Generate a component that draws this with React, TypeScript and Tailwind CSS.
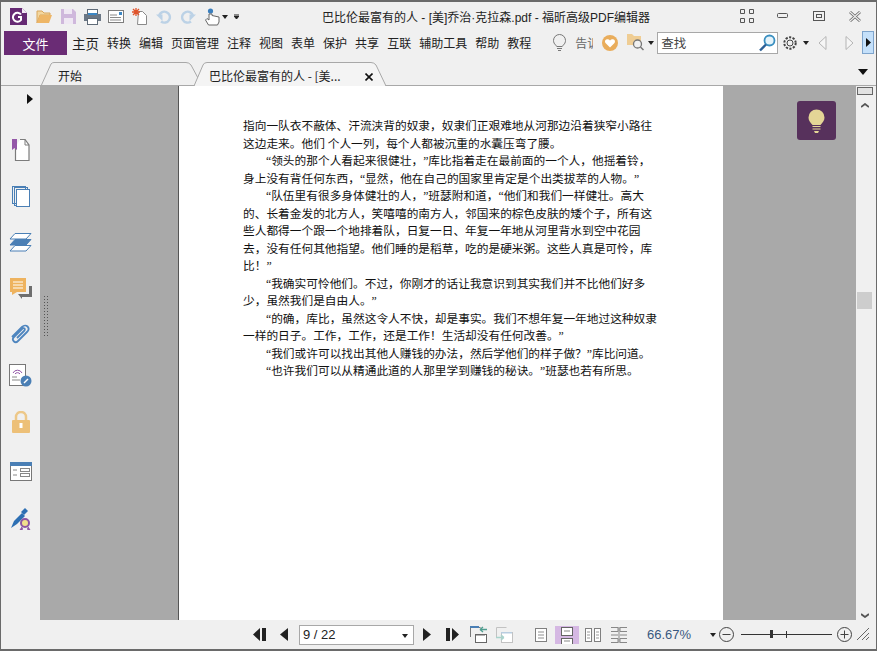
import React from "react";

const F = { fontFamily: '"Noto Sans CJK SC", sans-serif' };

const lines: [string, boolean][] = [
  ["指向一队衣不蔽体、汗流浃背的奴隶，奴隶们正艰难地从河那边沿着狭窄小路往", false],
  ["这边走来。他们 个人一列，每个人都被沉重的水囊压弯了腰。", false],
  ["“领头的那个人看起来很健壮，”库比指着走在最前面的一个人，他摇着铃，", true],
  ["身上没有背任何东西，“显然，他在自己的国家里肯定是个出类拔萃的人物。”", false],
  ["“队伍里有很多身体健壮的人，”班瑟附和道，“他们和我们一样健壮。高大", true],
  ["的、长着金发的北方人，笑嘻嘻的南方人，邻国来的棕色皮肤的矮个子，所有这", false],
  ["些人都得一个跟一个地排着队，日复一日、年复一年地从河里背水到空中花园", false],
  ["去，没有任何其他指望。他们睡的是稻草，吃的是硬米粥。这些人真是可怜，库", false],
  ["比！”", false],
  ["“我确实可怜他们。不过，你刚才的话让我意识到其实我们并不比他们好多", true],
  ["少，虽然我们是自由人。”", false],
  ["“的确，库比，虽然这令人不快，却是事实。我们不想年复一年地过这种奴隶", true],
  ["一样的日子。工作，工作，还是工作！生活却没有任何改善。”", false],
  ["“我们或许可以找出其他人赚钱的办法，然后学他们的样子做？”库比问道。", true],
  ["“也许我们可以从精通此道的人那里学到赚钱的秘诀。”班瑟也若有所思。", true],
];

const menu = ["转换", "编辑", "页面管理", "注释", "视图", "表单", "保护", "共享", "互联", "辅助工具", "帮助", "教程"];

function Ic({ w, h, ml = 0, children }: { w: number; h: number; ml?: number; children: React.ReactNode }) {
  return (
    <svg width={w} height={h} viewBox={`0 0 ${w} ${h}`} style={{ marginLeft: ml, flex: "none" }}>
      {children}
    </svg>
  );
}

function Caret({ ml, color = "#222" }: { ml: number; color?: string }) {
  return (
    <Ic w={6} h={4} ml={ml}>
      <path d="M0 0h6L3 4z" fill={color} />
    </Ic>
  );
}

export default function App() {
  return (
    <div className="relative w-[877px] h-[651px] flex flex-col overflow-hidden bg-[#f0f0f0] border-2 border-t-2 border-[#6a6a6a] border-r-[1px] border-l-[1px] text-[#222]" style={F}>
      {/* Title row */}
      <div className="relative h-[28px] flex items-center flex-none pl-[9px] pt-[1px]">
        <Ic w={17} h={17}>
          <path d="M0 0h12l5 5v12H0z" fill="#662a73" />
          <path d="M12 0v5h5z" fill="#f4e9f6" />
          <path d="M11 6.500A4.500 4.500 0 1 0 11 12V9H8" fill="none" stroke="#fff" strokeWidth="2" />
        </Ic>
        <Ic w={17} h={15} ml={9}>
          <path d="M1 14V2h5l2 2h6v2H4z" fill="#f3d79f" stroke="#d9a65c" />
          <path d="M1 14l3-8h12l-3 8z" fill="#eeb666" />
        </Ic>
        <Ic w={15} h={15} ml={8}>
          <path d="M0 0h12l3 3v12H0z" fill="#cfb8dc" />
          <rect x="3" y="0" width="8" height="5" fill="#efe8f3" />
          <rect x="3" y="9" width="9" height="6" fill="#efe8f3" />
        </Ic>
        <Ic w={17} h={16} ml={8}>
          <rect x="3.500" y="0.500" width="10" height="5" fill="#fff" stroke="#5f6b78" />
          <rect x="0" y="5" width="17" height="7" fill="#6b7785" />
          <rect x="4" y="4" width="9" height="2" fill="#3c87c4" />
          <rect x="3.500" y="9.500" width="10" height="6" fill="#fff" stroke="#5f6b78" />
        </Ic>
        <Ic w={16} h={13} ml={7}>
          <rect x="0.500" y="0.500" width="15" height="12" fill="#fff" stroke="#7d7d7d" />
          <rect x="11" y="2" width="3" height="3" fill="#3c87c4" />
          <path d="M2 5h7M2 7.500h11M2 10h11" stroke="#8a8a8a" />
        </Ic>
        <Ic w={15} h={17} ml={8}>
          <path d="M6.500 3.500h4l4 4v9h-9z" fill="#fff" stroke="#8a8a8a" />
          <path d="M4 0v8M0 4h8M1 1l6 6M7 1L1 7" stroke="#e0532a" strokeWidth="1.300" />
        </Ic>
        <Ic w={16} h={15} ml={9}>
          <path d="M3 7a5.500 5.500 0 1 1 2 5.500" fill="none" stroke="#bcd2e6" strokeWidth="2.400" />
          <path d="M0 5.500h6.500V12z" fill="#bcd2e6" />
        </Ic>
        <Ic w={16} h={15} ml={8}>
          <path d="M13 7a5.500 5.500 0 1 0-2 5.500" fill="none" stroke="#bcd2e6" strokeWidth="2.400" />
          <path d="M16 5.500H9.500V12z" fill="#bcd2e6" />
        </Ic>
        <Ic w={15} h={18} ml={9}>
          <circle cx="5.500" cy="3" r="2.600" fill="#3c7fbd" />
          <path d="M4 6v6L2 10.500 0.500 12l3 5h9l1.500-3v-5l-7-1.500V6z" fill="#fff" stroke="#666" />
        </Ic>
        <Caret ml={2} />
        <Ic w={5} h={6} ml={6}>
          <path d="M0 0h5M0 2h5L2.500 5z" stroke="#222" fill="#222" strokeWidth="1" />
        </Ic>
        <div className="absolute left-[321px] top-[7px] text-[12px] leading-[18px] whitespace-nowrap" style={{ fontFamily: '"Liberation Sans", "Noto Sans CJK SC", sans-serif' }}>巴比伦最富有的人 - [美]乔治·克拉森.pdf - 福昕高级PDF编辑器</div>
        <div className="absolute left-[739px] top-[7px] flex items-center">
          <Ic w={14} h={14}>
            <path d="M.5.5h4v4h-4zM9.500.5h4v4h-4zM.5 9.500h4v4h-4zM9.500 9.500h4v4h-4z" fill="none" stroke="#555" />
          </Ic>
          <Ic w={12} h={6} ml={23}>
            <rect x=".5" y=".5" width="10" height="4" rx="1" fill="none" stroke="#555" />
          </Ic>
          <Ic w={12} h={10} ml={24}>
            <rect x=".5" y=".5" width="11" height="9" fill="none" stroke="#555" />
            <rect x="3.500" y="3.500" width="5" height="3" fill="none" stroke="#555" />
          </Ic>
          <Ic w={12} h={11} ml={24}>
            <path d="M1 1l10 9M11 1L1 10" stroke="#666" strokeWidth="2.800" />
            <path d="M1 1l10 9M11 1L1 10" stroke="#eee" strokeWidth="1.200" />
          </Ic>
        </div>
      </div>

      {/* Menu row */}
      <div className="relative h-[25px] flex items-center flex-none pl-[3px]">
        <div className="w-[63px] h-[24px] flex items-center justify-center bg-[#6a2c75] text-white text-[13px] pt-[2px]">文件</div>
        <div className="ml-[5px] text-[13.500px] leading-[24px] whitespace-nowrap pt-[1px]">主页</div>
        <div className="ml-[8px] flex gap-[8px] text-[12px] leading-[24px] whitespace-nowrap pt-[1px]">
          {menu.map((m) => (
            <span key={m}>{m}</span>
          ))}
        </div>
        <Ic w={13} h={18} ml={22}>
          <path d="M4 12.500C1 10 .5 8 .5 6.500a6 6 0 0 1 12 0C12.500 8 12 10 9 12.500z" fill="none" stroke="#777" />
          <path d="M4 14.500h5M5 16.500h3" stroke="#777" />
        </Ic>
        <div className="ml-[9px] w-[18px] overflow-hidden text-[12px] text-[#666] leading-[18px] whitespace-nowrap pt-[1px]">告诉</div>
        <Ic w={16} h={16} ml={9}>
          <circle cx="8" cy="8" r="8" fill="#e9ad5c" />
          <path d="M8 12.500L3.500 8c-2-3 2.500-5 4.500-2.500C10 3 14.500 5 12.500 8z" fill="#fff" />
        </Ic>
        <Ic w={17} h={17} ml={9}>
          <path d="M0 0h5l2 2h7v9H0z" fill="#efcd94" />
          <circle cx="10.500" cy="10" r="4" fill="#f0f0f0" stroke="#777" strokeWidth="1.300" />
          <path d="M13.500 13l3 3" stroke="#777" strokeWidth="1.500" />
        </Ic>
        <Caret ml={4} />
        <div className="ml-[3px] w-[121px] h-[22px] relative flex items-center bg-white border border-[#a8a8a8] pl-[3px] pt-[1px] text-[12.500px] text-[#444]">
          查找
          <svg className="absolute right-[1px] top-[1px]" width="17" height="18" viewBox="0 0 17 18">
            <circle cx="10.500" cy="6.500" r="5" fill="#e5f3fa" stroke="#3a8fc0" strokeWidth="1.800" />
            <path d="M7 10.500l-6 6" stroke="#2b5f96" strokeWidth="2.400" />
          </svg>
        </div>
        <Ic w={14} h={14} ml={5}>
          <circle cx="7" cy="7" r="3" fill="none" stroke="#444" />
          <circle cx="7" cy="7" r="5.700" fill="none" stroke="#444" strokeWidth="2" strokeDasharray="2.200 1.400" />
        </Ic>
        <Caret ml={6} />
        <Ic w={9} h={14} ml={9}>
          <path d="M8 .5L1 7l7 6.500z" fill="#f6f6f6" stroke="#b4b4b4" />
        </Ic>
        <Ic w={9} h={14} ml={18}>
          <path d="M1 .5L8 7l-7 6.500z" fill="#f6f6f6" stroke="#b4b4b4" />
        </Ic>
        <div className="ml-[8px] w-[12px] h-[23px] flex items-center justify-center bg-[#c4e0fa] border border-[#7ea4cc]">
          <Ic w={5} h={9}>
            <path d="M0 0l5 4.500L0 9z" fill="#111" />
          </Ic>
        </div>
      </div>

      {/* Tab row */}
      <div className="relative h-[31px] flex-none border-b border-[#a8a8a8]">
        <div className="absolute left-[39px] top-[7px] w-[159px] h-[24px] text-[12px] leading-[24px] pl-[18px] pt-[2px]">
          <svg className="absolute left-0 top-0" width="159" height="24" viewBox="0 0 159 24">
            <path d="M1 24L11 2Q12 .5 14 .5H146Q149 .5 151 3L158 16" fill="none" stroke="#a8a8a8" />
          </svg>
          <span className="relative">开始</span>
        </div>
        <div className="absolute left-[192px] top-[7px] w-[194px] h-[25px] text-[12px] leading-[24px] pl-[16px] pt-[2px] flex items-center">
          <svg className="absolute left-0 top-0" width="194" height="25" viewBox="0 0 194 25">
            <path d="M1 24.500L10 3Q11 .5 14 .5H178Q181 .5 183 3L193 24.500z" fill="#f4f4f4" />
            <path d="M1 24L10 3Q11 .5 14 .5H178Q181 .5 183 3L193 24" fill="none" stroke="#a8a8a8" />
          </svg>
          <span className="relative whitespace-nowrap">巴比伦最富有的人 - [美...</span>
          <svg className="absolute left-[172px] top-[11px]" width="8" height="8" viewBox="0 0 8 8">
            <path d="M.5.5l7 7M7.500.5l-7 7" stroke="#111" strokeWidth="1.600" />
          </svg>
        </div>
        <svg className="absolute left-[857px] top-[14px]" width="10" height="6" viewBox="0 0 10 6">
          <path d="M0 0h10L5 6z" fill="#111" />
        </svg>
      </div>

      {/* Main */}
      <div className="flex-1 min-h-0 flex">
        <div className="w-[39px] flex-none flex flex-col items-center relative">
          <svg className="absolute left-[26px] top-[8px]" width="6" height="10" viewBox="0 0 6 10">
            <path d="M0 0l6 5-6 5z" fill="#111" />
          </svg>
          <div className="flex flex-col items-center pt-[53px]">
            <Ic w={18} h={22}>
              <path d="M3.500 8v13.500h13.500V6L13 .5H8" fill="#fff" stroke="#7c7c7c" strokeWidth="1.200" />
              <path d="M13 .5V6h4" fill="none" stroke="#7c7c7c" />
              <path d="M0 0h5v11l-2.500-2L0 11z" fill="#9457a8" />
            </Ic>
            <div className="h-[25px]" />
            <Ic w={18} h={21}>
              <rect x=".5" y=".5" width="13" height="17" fill="none" stroke="#4a7fb5" />
              <rect x="2.500" y="1.500" width="13" height="18" fill="none" stroke="#4a7fb5" />
              <rect x="4.500" y="3.500" width="13" height="17" fill="#fff" stroke="#4a7fb5" />
            </Ic>
            <div className="h-[26px]" />
            <Ic w={23} h={19}>
              <path d="M6 .5h16L17 6H1z" fill="#fff" stroke="#4a7fb5" />
              <path d="M6 6.500h16L17 12H1z" fill="#4a7fb5" stroke="#4a7fb5" />
              <path d="M6 12.500h16L17 18H1z" fill="#fff" stroke="#4a7fb5" />
            </Ic>
            <div className="h-[26px]" />
            <Ic w={22} h={22}>
              <rect x="0" y="0" width="16" height="14" fill="#eeb35f" />
              <path d="M2 14h5l-5 3z" fill="#eeb35f" />
              <path d="M3 4h10M3 7h10M3 10h10" stroke="#fff" />
              <path d="M8 16h11V8h3v11H12v2z" fill="#6e6e6e" />
            </Ic>
            <div className="h-[23px]" />
            <Ic w={21} h={21}>
              <path d="M2 14L12 4c4-4 9 1 5 5L8 18c-3 3-7-1-4-4l8-8c2-2 4 0 2 2l-7 7" fill="none" stroke="#4f86bf" strokeWidth="1.800" />
            </Ic>
            <div className="h-[20px]" />
            <Ic w={23} h={23}>
              <rect x=".5" y=".5" width="16" height="21" fill="#fff" stroke="#777" />
              <path d="M4 9a5 5 0 0 1 9 0M6 10a3 3 0 0 1 5 0" fill="none" stroke="#9457a8" />
              <path d="M3 13h5M3 16h8" stroke="#888" />
              <circle cx="17" cy="17" r="5.500" fill="#4a7fb5" />
              <path d="M15 19l4-4" stroke="#fff" strokeWidth="1.500" />
            </Ic>
            <div className="h-[24px]" />
            <Ic w={18} h={22}>
              <path d="M4 9V6a5 5 0 0 1 10 0v3" fill="none" stroke="#edc889" strokeWidth="2.500" />
              <rect x="0" y="9" width="18" height="13" rx="1" fill="#edc078" />
              <rect x="7.500" y="12" width="3" height="5" fill="#fff" />
            </Ic>
            <div className="h-[29px]" />
            <Ic w={22} h={19}>
              <rect x=".5" y=".5" width="21" height="18" fill="#fff" stroke="#777" />
              <rect x="0" y="0" width="22" height="4" fill="#4a7fb5" />
              <path d="M3 8h4M3 13h4" stroke="#888" />
              <rect x="10.500" y="6.500" width="9" height="3" fill="none" stroke="#888" />
              <rect x="10.500" y="11.500" width="9" height="3" fill="none" stroke="#888" />
            </Ic>
            <div className="h-[27px]" />
            <Ic w={22} h={22}>
              <path d="M1 20l3-7 8-8 3 3-8 8z" fill="#2d6fb3" />
              <path d="M11 4l4-4 3 3-4 4z" fill="#2d6fb3" />
              <circle cx="15" cy="15" r="4" fill="#f1df8c" stroke="#8d55a3" strokeWidth="2" />
              <path d="M12 19l-2 3 3-1M18 19l2 3-3-1" fill="#8d55a3" stroke="#8d55a3" />
            </Ic>
          </div>
        </div>

        <div className="relative flex-1 min-w-0 bg-[#a9a9a9] flex">
          <div className="absolute left-[3px] top-[209px] w-[5px] h-[43px] bg-[radial-gradient(#555_0.9px,transparent_1px)] bg-[length:3px_3px]" />
          <div className="ml-[138px] w-[545px] h-full bg-white border-l border-[#555] pt-[32px] pl-[64px] text-[11.700px] leading-[17.500px] text-[#111] whitespace-nowrap [text-spacing-trim:space-all]" style={{ fontFamily: '"Liberation Serif", "Noto Sans CJK SC", serif' }}>
            {lines.map(([t, ind]) => (
              <div key={t} className={ind ? "pl-[23px]" : ""}>
                {t}
              </div>
            ))}
          </div>
          <div className="absolute left-[757px] top-[15px] w-[39px] h-[39px] rounded-[3px] bg-[#57315c] flex items-center justify-center">
            <Ic w={17} h={24}>
              <path d="M4.500 16C2 13 .5 11.500.5 8.500a8 8 0 0 1 16 0C16.500 11.500 15 13 12.500 16z" fill="#e4d596" />
              <path d="M4.500 17.500h8M4.500 20h8" stroke="#e4d596" />
              <path d="M6 22h5l-1 2H7z" fill="#e4d596" />
            </Ic>
          </div>
        </div>

        <div className="w-[20px] flex-none flex flex-col items-center bg-[#f0f0f0] pr-[3px]">
          <div className="w-[16px] h-[8px] mt-[1px] bg-[#e2e2e2] border border-[#666]" />
          <div className="h-[8px]" />
          <Ic w={8} h={5} ml={0}>
            <path d="M0 4l4-3 4 3" fill="none" stroke="#555" strokeWidth="1.800" />
          </Ic>
          <div className="h-[184px]" />
          <div className="w-[15px] h-[17px] bg-[#cdcdcd]" />
          <div className="flex-1" />
          <Ic w={8} h={5}>
            <path d="M0 1l4 3 4-3" fill="none" stroke="#555" strokeWidth="1.800" />
          </Ic>
          <div className="h-[2px]" />
        </div>
      </div>

      {/* Bottom bar */}
      <div className="h-[29px] flex-none flex items-center pl-[252px] relative">
        <Ic w={13} h={13}>
          <path d="M7 0v13L0 6.500zM9 0h4v13H9z" fill="#222" />
        </Ic>
        <Ic w={8} h={13} ml={14}>
          <path d="M8 0v13L0 6.500z" fill="#222" />
        </Ic>
        <div className="ml-[11px] w-[115px] h-[20px] relative flex items-center bg-white border border-[#a8a8a8] pl-[3px] text-[13px] whitespace-nowrap" style={{ fontFamily: '"Liberation Sans", sans-serif' }}>
          9 / 22
          <svg className="absolute right-[5px] top-[8px]" width="6" height="4" viewBox="0 0 6 4">
            <path d="M0 0h6L3 4z" fill="#222" />
          </svg>
        </div>
        <Ic w={8} h={13} ml={9}>
          <path d="M0 0v13l8-6.500z" fill="#222" />
        </Ic>
        <Ic w={13} h={13} ml={15}>
          <path d="M0 0h4v13H0zM6 0v13l7-6.500z" fill="#222" />
        </Ic>
        <Ic w={17} h={17} ml={11}>
          <path d="M.5 11V1.500h10" fill="none" stroke="#777" />
          <path d="M0 0h9v2H0z" fill="#4a7fb5" />
          <rect x="5.500" y="8.500" width="11" height="8" fill="#fff" stroke="#666" />
          <path d="M5 8h10v1.500H5z" fill="#666" />
          <path d="M10 3.500h7M10 3.500l3-2.500M10 3.500l3 2.500" stroke="#4f9d8f" fill="none" strokeWidth="1.300" />
        </Ic>
        <Ic w={17} h={17} ml={9}>
          <path d="M.5 11V1.500h10" fill="none" stroke="#c2c2c2" />
          <rect x="5.500" y="6.500" width="11" height="10" fill="#fff" stroke="#c2c2c2" />
          <path d="M5 6h11v1.500H5z" fill="#b8cde0" />
          <path d="M0 11.500h8M8 11.500l-3-2.500M8 11.500l-3 2.500" stroke="#a9d3cc" fill="none" strokeWidth="1.300" />
        </Ic>
        <Ic w={12} h={14} ml={22}>
          <rect x=".5" y=".5" width="11" height="13" fill="#fff" stroke="#808080" />
          <path d="M3 4h6M3 7h6M3 10h6" stroke="#909090" />
        </Ic>
        <div className="ml-[8px] w-[24px] h-[18px] bg-[#d5b8e3] flex items-start justify-center overflow-hidden pt-[1px]">
          <Ic w={12} h={17}>
            <rect x=".5" y=".5" width="11" height="8" fill="#fff" stroke="#666" />
            <rect x=".5" y="11.500" width="11" height="8" fill="#fff" stroke="#666" />
            <path d="M3 4h6M3 14h6" stroke="#888" />
          </Ic>
        </div>
        <Ic w={16} h={14} ml={6}>
          <rect x=".5" y=".5" width="6" height="13" fill="#fff" stroke="#808080" />
          <rect x="9.500" y=".5" width="6" height="13" fill="#fff" stroke="#808080" />
          <path d="M2 4h3M2 7h3M2 10h3M11 4h3M11 7h3M11 10h3" stroke="#999" />
        </Ic>
        <Ic w={16} h={16} ml={10}>
          <path d="M0 .5h7v4H0M16 .5H9v4h7M0 8h7M9 8h7M0 11.500h7v4H0M16 11.500H9v4h7M8 0v16" fill="none" stroke="#888" />
        </Ic>
        <div className="ml-[20px] w-[44px] text-[#39587f] text-[13px] whitespace-nowrap" style={{ fontFamily: '"Liberation Sans", sans-serif' }}>66.67%</div>
        <Caret ml={19} />
        <Ic w={15} h={15} ml={3}>
          <circle cx="7.500" cy="7.500" r="7" fill="none" stroke="#444" />
          <path d="M3.500 7.500h8" stroke="#444" />
        </Ic>
        <div className="ml-[7px] w-[91px] h-[13px] relative flex items-center">
          <div className="w-full h-[1px] bg-[#333]" />
          <div className="absolute left-[29px] top-[2px] w-[3px] h-[8px] bg-[#333]" />
          <div className="absolute left-[45px] top-[3px] w-[1px] h-[7px] bg-[#333]" />
        </div>
        <Ic w={15} h={15} ml={5}>
          <circle cx="7.500" cy="7.500" r="7" fill="none" stroke="#444" />
          <path d="M3.500 7.500h8M7.500 3.500v8" stroke="#444" />
        </Ic>
        <Ic w={13} h={13} ml={5}>
          <path d="M0 12L12 0M5 12l7-7M9 12l3-3" stroke="#666" />
        </Ic>
      </div>
    </div>
  );
}
